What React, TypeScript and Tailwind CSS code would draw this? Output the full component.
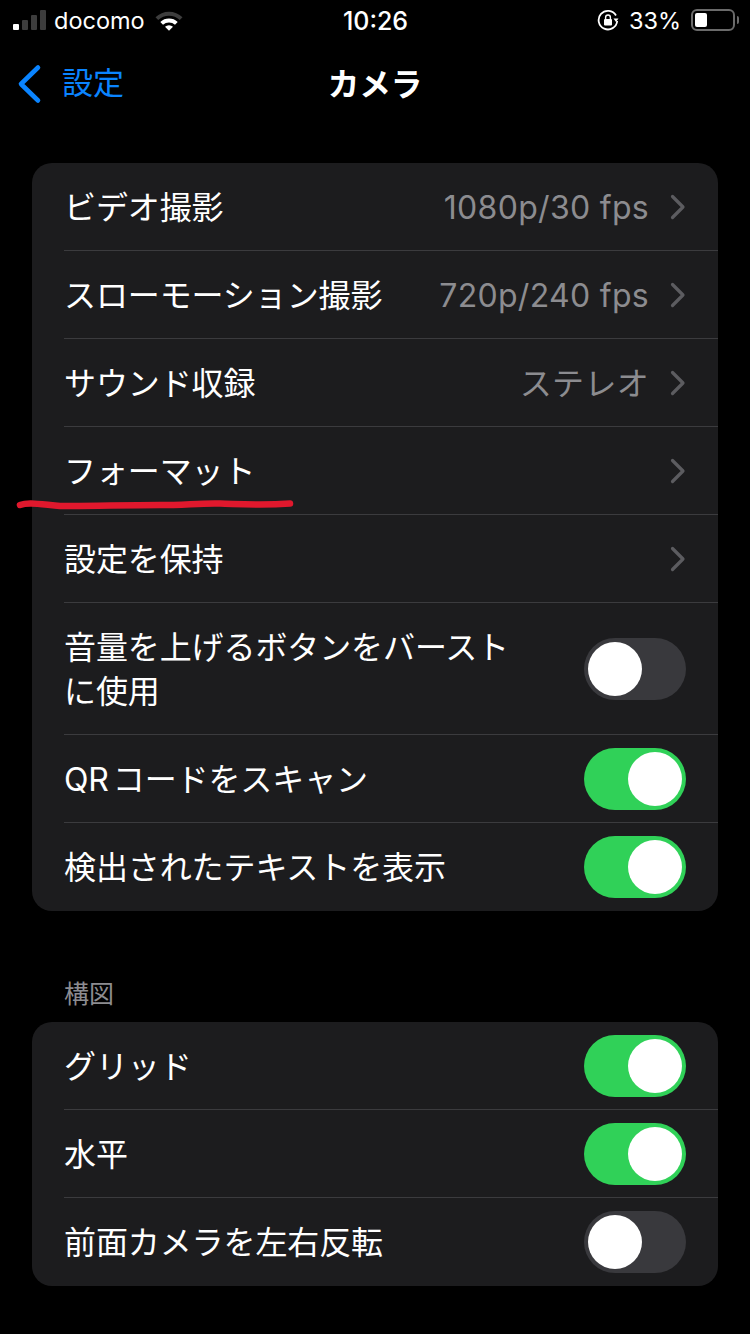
const font = { fontFamily: 'Inter, "Noto Sans CJK JP", sans-serif' };

function Chevron() {
  return (
    <svg width="16" height="26" viewBox="0 0 16 26" fill="none" className="shrink-0">
      <path d="M2.5 2.5 L13 13 L2.5 23.5" stroke="#5c5c60" strokeWidth="3.2" strokeLinecap="round" strokeLinejoin="round" />
    </svg>
  );
}

function Toggle({ on }: { on: boolean }) {
  return (
    <div className={`w-[102px] h-[62px] shrink-0 rounded-full p-1 flex ${on ? 'bg-[#30d158] justify-end' : 'bg-[#39393d] justify-start'}`}>
      <div className="w-[54px] h-[54px] rounded-full bg-white" />
    </div>
  );
}

function Row({ label, value, chevron, on, h = 'h-[88px]', last }: {
  label: React.ReactNode; value?: string; chevron?: boolean; on?: boolean; h?: string; last?: boolean;
}) {
  return (
    <div className={`${h} ml-8 pr-8 flex items-center justify-between ${last ? '' : 'border-b border-[#3b3b3e]'}`}>
      <div className="pt-[2px] text-[32px] leading-[44px] text-white tracking-[-0.1px] [word-spacing:-5px] whitespace-nowrap">{label}</div>
      {chevron ? (
        <div className="flex items-center gap-[21px]">
          {value && <span className="pt-[2px] text-[32px] leading-[44px] tracking-[0.3px] text-[#8c8c90] whitespace-nowrap">{value}</span>}
          <Chevron />
        </div>
      ) : (
        <Toggle on={!!on} />
      )}
    </div>
  );
}

export default function App() {
  return (
    <div className="relative w-[750px] h-[1334px] bg-black overflow-hidden" style={font}>
      {/* status bar */}
      <div className="h-10 pl-[13px] pr-[11px] flex items-center justify-between text-white">
        <div className="w-[230px] flex items-center gap-[9px]">
          <div className="flex items-end gap-[3px] h-5">
            <div className="w-[6px] h-[6px] rounded-[1px] bg-white" />
            <div className="w-[6px] h-[10px] rounded-[1px] bg-[#3d3d3d]" />
            <div className="w-[6px] h-[15px] rounded-[1px] bg-[#3d3d3d]" />
            <div className="w-[6px] h-5 rounded-[1px] bg-[#3d3d3d]" />
          </div>
          <span className="pt-[2px] -ml-[1px] text-[23.5px] leading-none">docomo</span>
          <svg width="30" height="22" viewBox="0 0 30 22">
            <path d="M1.5 8.2 A19.5 19.5 0 0 1 28.5 8.2 L25.8 11 A15.6 15.6 0 0 0 4.2 11 Z" fill="#3d3d3d" />
            <path d="M6.3 13 A12.8 12.8 0 0 1 23.7 13 L21 15.8 A8.9 8.9 0 0 0 9 15.8 Z" fill="#fff" />
            <path d="M11 17.8 A6 6 0 0 1 19 17.8 L15 21.8 Z" fill="#fff" />
          </svg>
        </div>
        <span className="pt-[2px] -ml-[1px] text-[25px] leading-none font-medium">10:26</span>
        <div className="w-[230px] flex items-center justify-end gap-[10px]">
          <svg width="22" height="22" viewBox="0 0 22 22" fill="none">
            <path d="M19 6.5 A9.3 9.3 0 1 0 20.2 12" stroke="#fff" strokeWidth="1.8" />
            <path d="M16.5 9.5 L21.5 9.5 L19 13 Z" fill="#fff" />
            <rect x="7" y="10" width="8" height="6.5" rx="1" fill="#fff" />
            <path d="M8.6 10 V8.4 A2.4 2.4 0 0 1 13.4 8.4 V10" stroke="#fff" strokeWidth="1.4" />
          </svg>
          <span className="pt-[2px] text-[23.5px] leading-none">33%</span>
          <div className="flex items-center gap-[2px]">
            <div className="w-[44px] h-[22px] rounded-[6px] border-2 border-[#6a6a6a] p-[2px]">
              <div className="w-[12px] h-full rounded-[2px] bg-white" />
            </div>
            <div className="w-[2px] h-2 rounded-r-sm bg-[#6a6a6a]" />
          </div>
        </div>
      </div>

      {/* nav bar */}
      <div className="relative h-[88px] flex items-center justify-center">
        <div className="absolute left-[16px] top-[24px] flex items-center gap-[20px]">
          <svg width="26" height="40" viewBox="0 0 26 40" fill="none">
            <path d="M22 3.5 L5 20 L22 36.5" stroke="#0a84ff" strokeWidth="4.6" strokeLinecap="round" strokeLinejoin="round" />
          </svg>
          <span className="pb-[4px] text-[31px] leading-none text-[#0a84ff]">設定</span>
        </div>
        <span className="pt-[2px] text-[31.5px] leading-none font-bold text-white">カメラ</span>
      </div>

      {/* main group */}
      <div className="mx-8 mt-[35px] rounded-[20px] bg-[#1c1c1e] overflow-hidden">
        <Row label="ビデオ撮影" value="1080p/30 fps" chevron />
        <Row label="スローモーション撮影" value="720p/240 fps" chevron />
        <Row label="サウンド収録" value="ステレオ" chevron />
        <Row label="フォーマット" chevron />
        <Row label="設定を保持" chevron />
        <Row label={<>音量を上げるボタンをバースト<br />に使用</>} h="h-[132px]" on={false} />
        <Row label="QR コードをスキャン" on />
        <Row label="検出されたテキストを表示" on last />
      </div>

      <div className="mt-[65px] ml-16 h-[46px] text-[25px] leading-[36px] text-[#8c8c90]">構図</div>

      <div className="mx-8 rounded-[20px] bg-[#1c1c1e] overflow-hidden">
        <Row label="グリッド" on />
        <Row label="水平" on />
        <Row label="前面カメラを左右反転" on={false} last />
      </div>

      {/* red pen mark on the screenshot */}
      <svg className="absolute left-0 top-[490px]" width="310" height="30" viewBox="0 0 310 30" fill="none">
        <path d="M20 15 C28 12 38 14 60 16 C90 16.5 120 15 160 15 C185 15 200 13 220 13.5 C240 14 260 15.5 290 13.5" stroke="#e0182d" strokeWidth="6.5" strokeLinecap="round" />
      </svg>
    </div>
  );
}
